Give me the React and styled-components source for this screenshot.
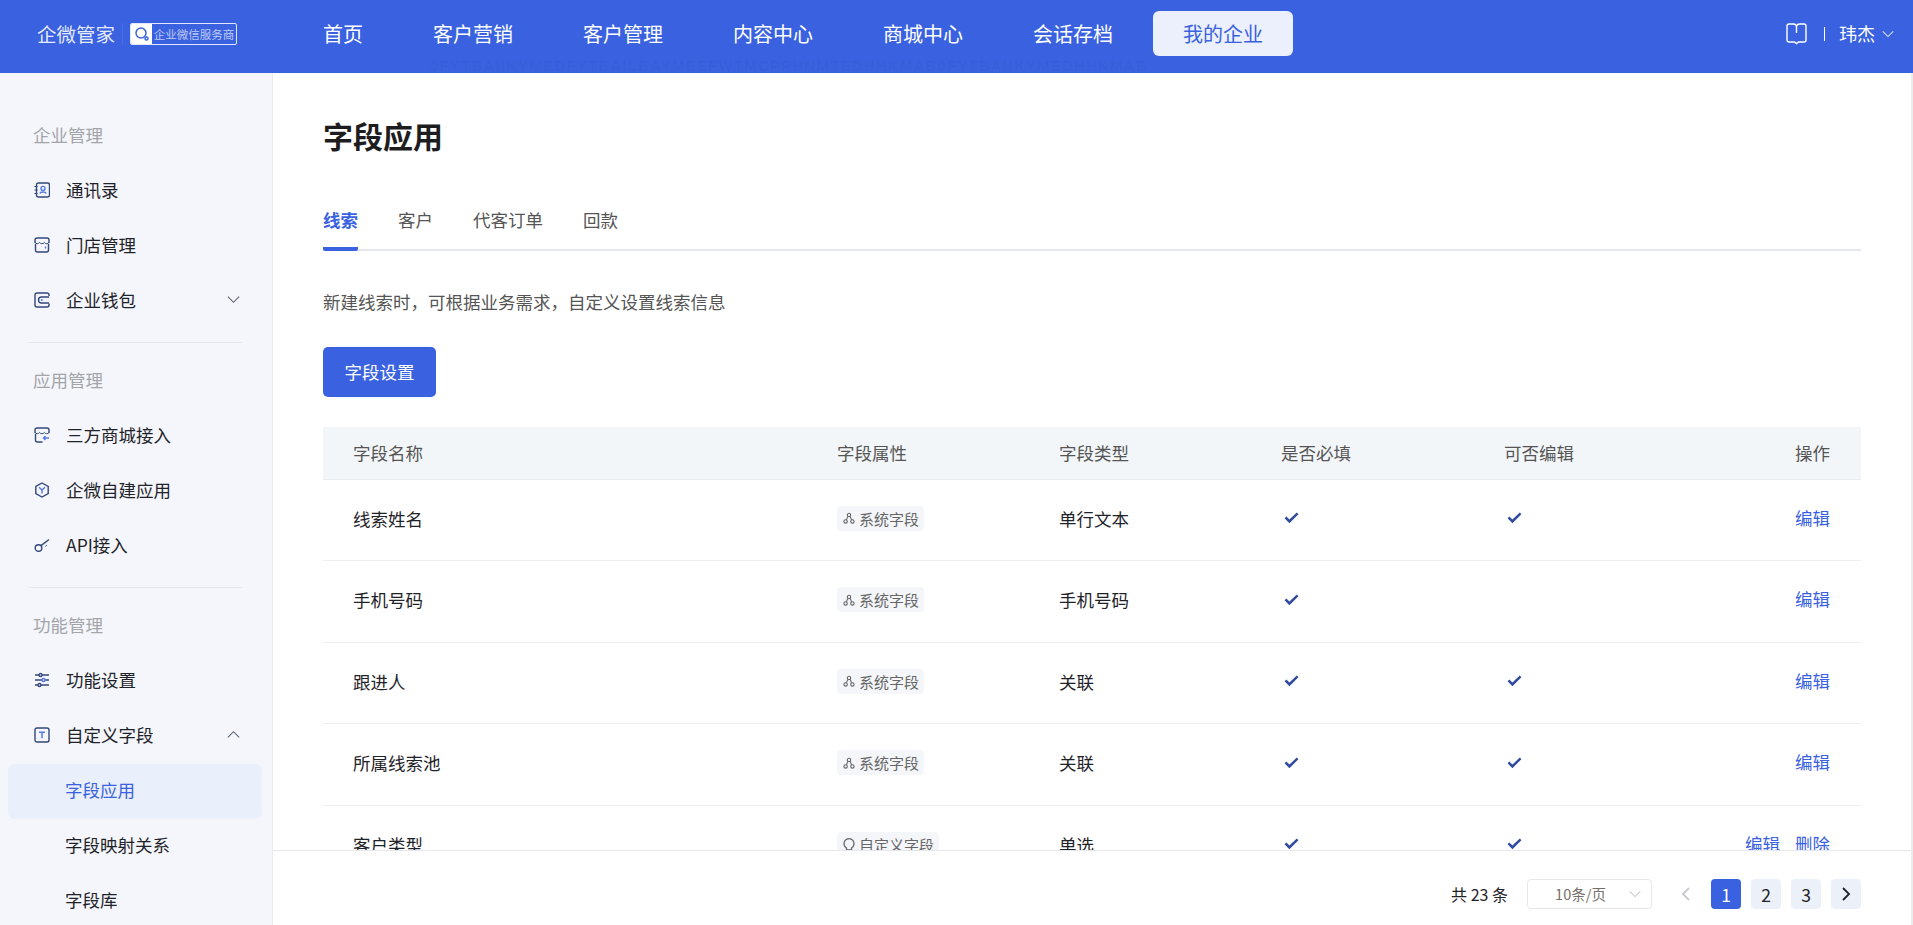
import React from 'react'
import styled, { createGlobalStyle, css } from 'styled-components'

const Global = createGlobalStyle`
html, body { margin: 0; padding: 0; height: 100%; }
body {
  font-family: "Noto Sans CJK SC", "Liberation Sans", sans-serif;
  color: #1f2329;
  background: #fff;
  overflow: hidden;
}
* { box-sizing: border-box; }
`

const Page = styled.div`
display: flex;
flex-direction: column;
height: 100vh;
overflow: hidden;
`

/* top bar */
const Header = styled.header`
position: relative;
flex: none;
height: 73px;
background: #3a62e0;
display: flex;
align-items: flex-start;
padding: 11px 18px 0 37px;
color: #fff;
`
const Watermark = styled.div`
position: absolute;
left: 430px;
top: 58px;
font-size: 15px;
line-height: 15px;
font-weight: 700;
letter-spacing: 1.2px;
font-family: "Liberation Sans", sans-serif;
color: rgba(20, 40, 120, 0.06);
white-space: nowrap;
`
const Brand = styled.div`
display: flex;
align-items: center;
height: 45px;
width: 286px;
flex: none;
`
const BrandName = styled.span`
font-size: 19.5px;
line-height: 45px;
color: rgba(255, 255, 255, 0.88);
width: 78px;
white-space: nowrap;
`
const BrandLine = styled.span`
width: 1px;
height: 22px;
margin: 0 7px 0 7px;
background: rgba(255, 255, 255, 0.08);
`
const Badge = styled.div`
display: flex;
align-items: stretch;
width: 107px;
height: 22px;
border: 1px solid rgba(255, 255, 255, 0.85);
border-radius: 2px;
overflow: hidden;
`
const BadgeIcon = styled.div`
width: 21px;
background: #fff;
display: flex;
align-items: center;
justify-content: center;
`
const BadgeText = styled.div`
flex: 1;
font-size: 11.5px;
line-height: 20px;
color: rgba(255, 255, 255, 0.68);
text-align: center;
white-space: nowrap;
`
const Nav = styled.nav`
display: flex;
align-items: center;
height: 45px;
`
const NavItem = styled.a`
font-size: 20px;
line-height: 45px;
margin-right: 70px;
color: #fff;
white-space: nowrap;
`
const NavActive = styled.a`
width: 140px;
height: 45px;
margin-left: -30px;
border-radius: 6px;
background: #ecf0fc;
color: #3a62e0;
font-size: 20px;
line-height: 45px;
text-align: center;
`
const UserBox = styled.div`
margin-left: auto;
display: flex;
align-items: center;
height: 45px;
font-size: 18px;
`
const UserLine = styled.span`
width: 1.5px;
height: 14px;
background: #fff;
margin: 0 14px 0 17px;
`
const UserName = styled.span`
line-height: 45px;
margin-right: 6px;
`

/* body */
const Body = styled.div`
flex: 1;
min-height: 0;
display: flex;
`
const Sidebar = styled.aside`
flex: none;
width: 273px;
height: 100%;
overflow: hidden;
padding-top: 35.5px;
background: #f4f6fb;
border-right: 1px solid #e9ebf0;
`
const GroupTitle = styled.div`
height: 55px;
line-height: 52px;
padding-left: 33px;
font-size: 17.5px;
color: #a3a5a9;
`
const SideItem = styled.div`
display: flex;
align-items: center;
height: 55px;
padding: 0 31px 3px 34px;
font-size: 17.5px;
color: #1f2329;
`
const SideIcon = styled.span`
display: flex;
width: 16px;
height: 16px;
margin-right: 16px;
flex: none;
`
const SideArrow = styled.span`
display: flex;
margin-left: auto;
`
const SubItem = styled.div`
display: flex;
align-items: center;
height: 55px;
margin: 0 10px 0 8px;
padding: 0 0 3px 57px;
border-radius: 7px;
font-size: 17.5px;
color: ${p => (p.$active ? '#3a62e0' : '#1f2329')};
background: ${p => (p.$active ? '#e9effb' : 'transparent')};
`
const SideDivider = styled.div`
height: 1px;
margin: 13.5px 30px 10.5px 28px;
background: #e6e8ed;
`

/* main */
const Main = styled.main`
flex: 1;
min-width: 0;
display: flex;
flex-direction: column;
background: #fff;
border-right: 2px solid #ececec;
`
const Scroll = styled.div`
flex: 1;
min-height: 0;
overflow: hidden;
padding: 46.5px 50px 0 50px;
`
const Title = styled.h1`
margin: 0;
font-size: 30px;
line-height: 30px;
font-weight: 700;
color: #1d1d1f;
`
const Tabs = styled.div`
display: flex;
gap: 40px;
margin-top: 53.5px;
height: 48px;
border-bottom: 2px solid #e4e7ed;
`
const Tab = styled.div`
height: 48px;
padding-top: 5px;
font-size: 17.5px;
line-height: 24px;
font-weight: ${p => (p.$active ? 700 : 400)};
color: ${p => (p.$active ? '#3a62e0' : '#555')};
border-bottom: ${p => (p.$active ? '4px solid #3a62e0' : 'none')};
border-radius: 0 0 2px 2px;
`
const Desc = styled.p`
margin: 39px 0 0;
font-size: 17.5px;
line-height: 24px;
color: #555;
`
const Primary = styled.button`
display: block;
margin-top: 33px;
width: 113px;
height: 50px;
border: 0;
border-radius: 5px;
padding: 0 0 2px;
background: #3a62e0;
color: #fff;
font-family: inherit;
font-size: 17.5px;
`
const Table = styled.div`
margin-top: 30px;
`
const columns = css`
display: grid;
grid-template-columns: 484px 222px 222px 223px 1fr 200px;
align-items: center;
font-size: 17.5px;
`
const HeadRow = styled.div`
${columns}
height: 52.5px;
background: #f3f6f9;
border-bottom: 1px solid #e9ecf0;
color: #555;
`
const Row = styled.div`
${columns}
height: 81.5px;
padding-bottom: 3px;
border-bottom: 1.5px solid #eeeff2;
color: #1f2329;
`
const Cell = styled.div`
padding-left: 30px;
display: flex;
align-items: center;
`
const OpCell = styled.div`
padding-right: 31px;
padding-bottom: ${p => (p.$head ? '0' : '2px')};
display: flex;
justify-content: flex-end;
gap: 15px;
color: ${p => (p.$head ? '#555' : '#3a62e0')};
`
const CheckMark = styled.svg`
margin-left: 3px;
`
const FieldTag = styled.span`
display: inline-flex;
align-items: center;
gap: 4px;
height: 25px;
padding: 0 5px 0 6px;
border-radius: 4px;
background: #f4f6fa;
font-size: 15px;
color: #666;
`

/* footer */
const Footer = styled.footer`
flex: none;
height: 75px;
border-top: 1.5px solid #e6e8ee;
display: flex;
align-items: center;
justify-content: flex-end;
padding: 12px 50px 0 0;
background: #fff;
`
const Total = styled.span`
font-size: 16px;
white-space: nowrap;
margin-right: 19px;
`
const PageSize = styled.div`
position: relative;
width: 125px;
height: 30px;
border: 1px solid #e5e7ec;
border-radius: 4px;
font-size: 14.5px;
line-height: 28px;
color: #77706a;
text-align: center;
padding-right: 18px;
margin-right: 9px;
`
const SizeArrow = styled.span`
position: absolute;
right: 9px;
top: 7px;
display: flex;
`
const PageBtn = styled.div`
width: 30px;
height: 30px;
margin-left: 10px;
border-radius: 4px;
display: flex;
align-items: center;
justify-content: center;
font-size: 17.5px;
background: ${p => (p.$active ? '#3a62e0' : p.$plain ? 'transparent' : '#ecf0f8')};
color: ${p => (p.$active ? '#fff' : '#1f2329')};
`

const ICON = '#33477a'
const ACCENT = '#5577e8'

const Chevron = ({ up, color = '#5d6470', size = 15 }) => (
  <svg width={size} height={size} viewBox="0 0 16 16" fill="none" stroke={color} strokeWidth="1.2">
    <path d={up ? 'M2 11 L8 5 L14 11' : 'M2 5 L8 11 L14 5'} />
  </svg>
)
const Icon16 = ({ children }) => (
  <SideIcon>
    <svg width="16" height="16" viewBox="0 0 16 16" fill="none" stroke={ICON} strokeWidth="1.4">{children}</svg>
  </SideIcon>
)
const BookIcon = () => (
  <Icon16>
    <rect x="2.5" y="1" width="13" height="14" rx="2" />
    <path d="M0.5 4.5h3M0.5 8h3M0.5 11.5h3" strokeWidth="1" />
    <circle cx="9" cy="6.4" r="2" stroke={ACCENT} />
    <path d="M5.8 11.5c.6-2 5.8-2 6.4 0" stroke={ACCENT} />
  </Icon16>
)
const ShopIcon = ({ arrow }) => (
  <Icon16>
    <path d="M1 6V3a2 2 0 0 1 2-2h10a2 2 0 0 1 2 2v3" />
    <path d="M1 5.5c1.2 1.6 3.2 1.6 4.6 0 1 1.6 3.6 1.6 4.8 0 1.2 1.6 3.4 1.6 4.6 0" strokeWidth="1" />
    {arrow ? (
      <>
        <path d="M1.5 7v6a2 2 0 0 0 2 2h5" />
        <path d="M15 11h-5.5M11.5 9l-2 2 2 2" stroke={ACCENT} />
      </>
    ) : (
      <>
        <path d="M1.5 7v6a2 2 0 0 0 2 2h9a2 2 0 0 0 2-2V7" />
        <path d="M11.5 9.5v2" stroke={ACCENT} />
      </>
    )}
  </Icon16>
)
const WalletIcon = () => (
  <Icon16>
    <path d="M15 4V3a2 2 0 0 0-2-2H3a2 2 0 0 0-2 2v10a2 2 0 0 0 2 2h10a2 2 0 0 0 2-2v-1.5" strokeWidth="1.4" />
    <path d="M15 5H7.5a3 3 0 0 0 0 6H15" strokeWidth="1.4" />
    <circle cx="7.8" cy="8" r="1" fill={ACCENT} stroke="none" />
  </Icon16>
)
const HexIcon = () => (
  <Icon16>
    <path d="M8 1l6.2 3.5v7L8 15l-6.2-3.5v-7z" />
    <path d="M5 5.2L8 8l3-2.8M8 8v3.5" stroke={ACCENT} />
  </Icon16>
)
const KeyIcon = () => (
  <Icon16>
    <circle cx="4.5" cy="11" r="3.3" />
    <path d="M7 8.6L15 2.5" />
    <path d="M11 9.5l2-1.5" stroke={ACCENT} strokeWidth="1" />
  </Icon16>
)
const SliderIcon = () => (
  <Icon16>
    <path d="M1 3h4M8 3h7M1 8h7M11 8h4M1 13h3M7 13h8" />
    <circle cx="6.5" cy="3" r="1.5" />
    <circle cx="9.5" cy="8" r="1.5" stroke={ACCENT} />
    <circle cx="5.5" cy="13" r="1.5" />
  </Icon16>
)
const TextIcon = () => (
  <Icon16>
    <rect x="1" y="1" width="14" height="14" rx="2" strokeWidth="1.4" />
    <path d="M5 5.2h6M8 5.2v6" stroke={ACCENT} strokeWidth="1.5" />
  </Icon16>
)
const Check = () => (
  <CheckMark width="15" height="12" viewBox="0 0 15 12">
    <path d="M0.6 6.2 L2.4 4.6 L5.4 7.6 L12.8 0.6 L14.4 2.2 L5.4 11.2 Z" fill="#2f4a9f" />
  </CheckMark>
)
const SystemIcon = () => (
  <svg width="12" height="12" viewBox="0 0 12 12" fill="none" stroke="#666" strokeWidth="1.1">
    <circle cx="6" cy="3" r="1.7" />
    <circle cx="2.6" cy="9.4" r="1.7" />
    <circle cx="9.4" cy="9.4" r="1.7" />
    <path d="M4.8 4.4L3.4 7.9M7.2 4.4L8.6 7.9" />
  </svg>
)
const CustomIcon = () => (
  <svg width="12" height="14" viewBox="0 0 12 14" fill="none" stroke="#666" strokeWidth="1.3">
    <path d="M3.5 11A5 5 0 1 1 8.5 11V13H3.5Z" />
  </svg>
)

const rows = [
  { name: '线索姓名', type: '单行文本', req: true, edit: true },
  { name: '手机号码', type: '手机号码', req: true, edit: false },
  { name: '跟进人', type: '关联', req: true, edit: true },
  { name: '所属线索池', type: '关联', req: true, edit: true },
  { name: '客户类型', type: '单选', req: true, edit: true, custom: true },
]

export default function App() {
  return (
    <Page>
      <Global />
      <Header>
        <Brand>
          <BrandName>企微管家</BrandName>
          <BrandLine />
          <Badge>
            <BadgeIcon>
              <svg width="16" height="16" viewBox="0 0 16 16" fill="none" stroke="#3a62e0" strokeWidth="1.5">
                <circle cx="7" cy="7" r="5" />
                <circle cx="12.5" cy="12.5" r="1.5" />
              </svg>
            </BadgeIcon>
            <BadgeText>企业微信服务商</BadgeText>
          </Badge>
        </Brand>
        <Nav>
          <NavItem>首页</NavItem>
          <NavItem>客户营销</NavItem>
          <NavItem>客户管理</NavItem>
          <NavItem>内容中心</NavItem>
          <NavItem>商城中心</NavItem>
          <NavItem>会话存档</NavItem>
          <NavActive>我的企业</NavActive>
        </Nav>
        <UserBox>
          <svg width="21" height="22" viewBox="0 0 21 22" fill="none" stroke="#fff" strokeWidth="1.4">
            <path d="M1 3a2 2 0 0 1 2-2h4.5c1.5 0 2.5.8 3 2 .5-1.2 1.5-2 3-2H18a2 2 0 0 1 2 2v14a2 2 0 0 1-2 2h-5.5l-2 1.5-2-1.5H3a2 2 0 0 1-2-2z" />
            <path d="M10.5 3v7" />
          </svg>
          <UserLine />
          <UserName>玮杰</UserName>
          <Chevron color="rgba(255,255,255,.8)" size={14} />
        </UserBox>
        <Watermark>0FYTBAIIKYMEDFYTBAILBAYMEEFWTMCPPHNMTEDHHKMAB0FYTBAIIKYMEDHHKMAB</Watermark>
      </Header>
      <Body>
        <Sidebar>
          <GroupTitle>企业管理</GroupTitle>
          <SideItem><BookIcon />通讯录</SideItem>
          <SideItem><ShopIcon />门店管理</SideItem>
          <SideItem><WalletIcon />企业钱包<SideArrow><Chevron /></SideArrow></SideItem>
          <SideDivider />
          <GroupTitle>应用管理</GroupTitle>
          <SideItem><ShopIcon arrow />三方商城接入</SideItem>
          <SideItem><HexIcon />企微自建应用</SideItem>
          <SideItem><KeyIcon />API接入</SideItem>
          <SideDivider />
          <GroupTitle>功能管理</GroupTitle>
          <SideItem><SliderIcon />功能设置</SideItem>
          <SideItem><TextIcon />自定义字段<SideArrow><Chevron up /></SideArrow></SideItem>
          <SubItem $active>字段应用</SubItem>
          <SubItem>字段映射关系</SubItem>
          <SubItem>字段库</SubItem>
        </Sidebar>
        <Main>
          <Scroll>
            <Title>字段应用</Title>
            <Tabs>
              <Tab $active>线索</Tab>
              <Tab>客户</Tab>
              <Tab>代客订单</Tab>
              <Tab>回款</Tab>
            </Tabs>
            <Desc>新建线索时，可根据业务需求，自定义设置线索信息</Desc>
            <Primary>字段设置</Primary>
            <Table>
              <HeadRow>
                <Cell>字段名称</Cell>
                <Cell>字段属性</Cell>
                <Cell>字段类型</Cell>
                <Cell>是否必填</Cell>
                <Cell>可否编辑</Cell>
                <OpCell $head>操作</OpCell>
              </HeadRow>
              {rows.map(r => (
                <Row key={r.name}>
                  <Cell>{r.name}</Cell>
                  <Cell>
                    {r.custom
                      ? <FieldTag><CustomIcon />自定义字段</FieldTag>
                      : <FieldTag><SystemIcon />系统字段</FieldTag>}
                  </Cell>
                  <Cell>{r.type}</Cell>
                  <Cell>{r.req && <Check />}</Cell>
                  <Cell>{r.edit && <Check />}</Cell>
                  <OpCell>
                    <span>编辑</span>
                    {r.custom && <span>删除</span>}
                  </OpCell>
                </Row>
              ))}
            </Table>
          </Scroll>
          <Footer>
            <Total>共 23 条</Total>
            <PageSize>
              10条/页
              <SizeArrow><Chevron color="#c8cad0" size={14} /></SizeArrow>
            </PageSize>
            <PageBtn $plain>
              <svg width="12" height="16" viewBox="0 0 12 16" fill="none" stroke="#c8cad0" strokeWidth="1.8"><path d="M9 2L3 8l6 6" /></svg>
            </PageBtn>
            <PageBtn $active>1</PageBtn>
            <PageBtn>2</PageBtn>
            <PageBtn>3</PageBtn>
            <PageBtn>
              <svg width="12" height="16" viewBox="0 0 12 16" fill="none" stroke="#1f2329" strokeWidth="1.8"><path d="M3 2l6 6-6 6" /></svg>
            </PageBtn>
          </Footer>
        </Main>
      </Body>
    </Page>
  )
}
